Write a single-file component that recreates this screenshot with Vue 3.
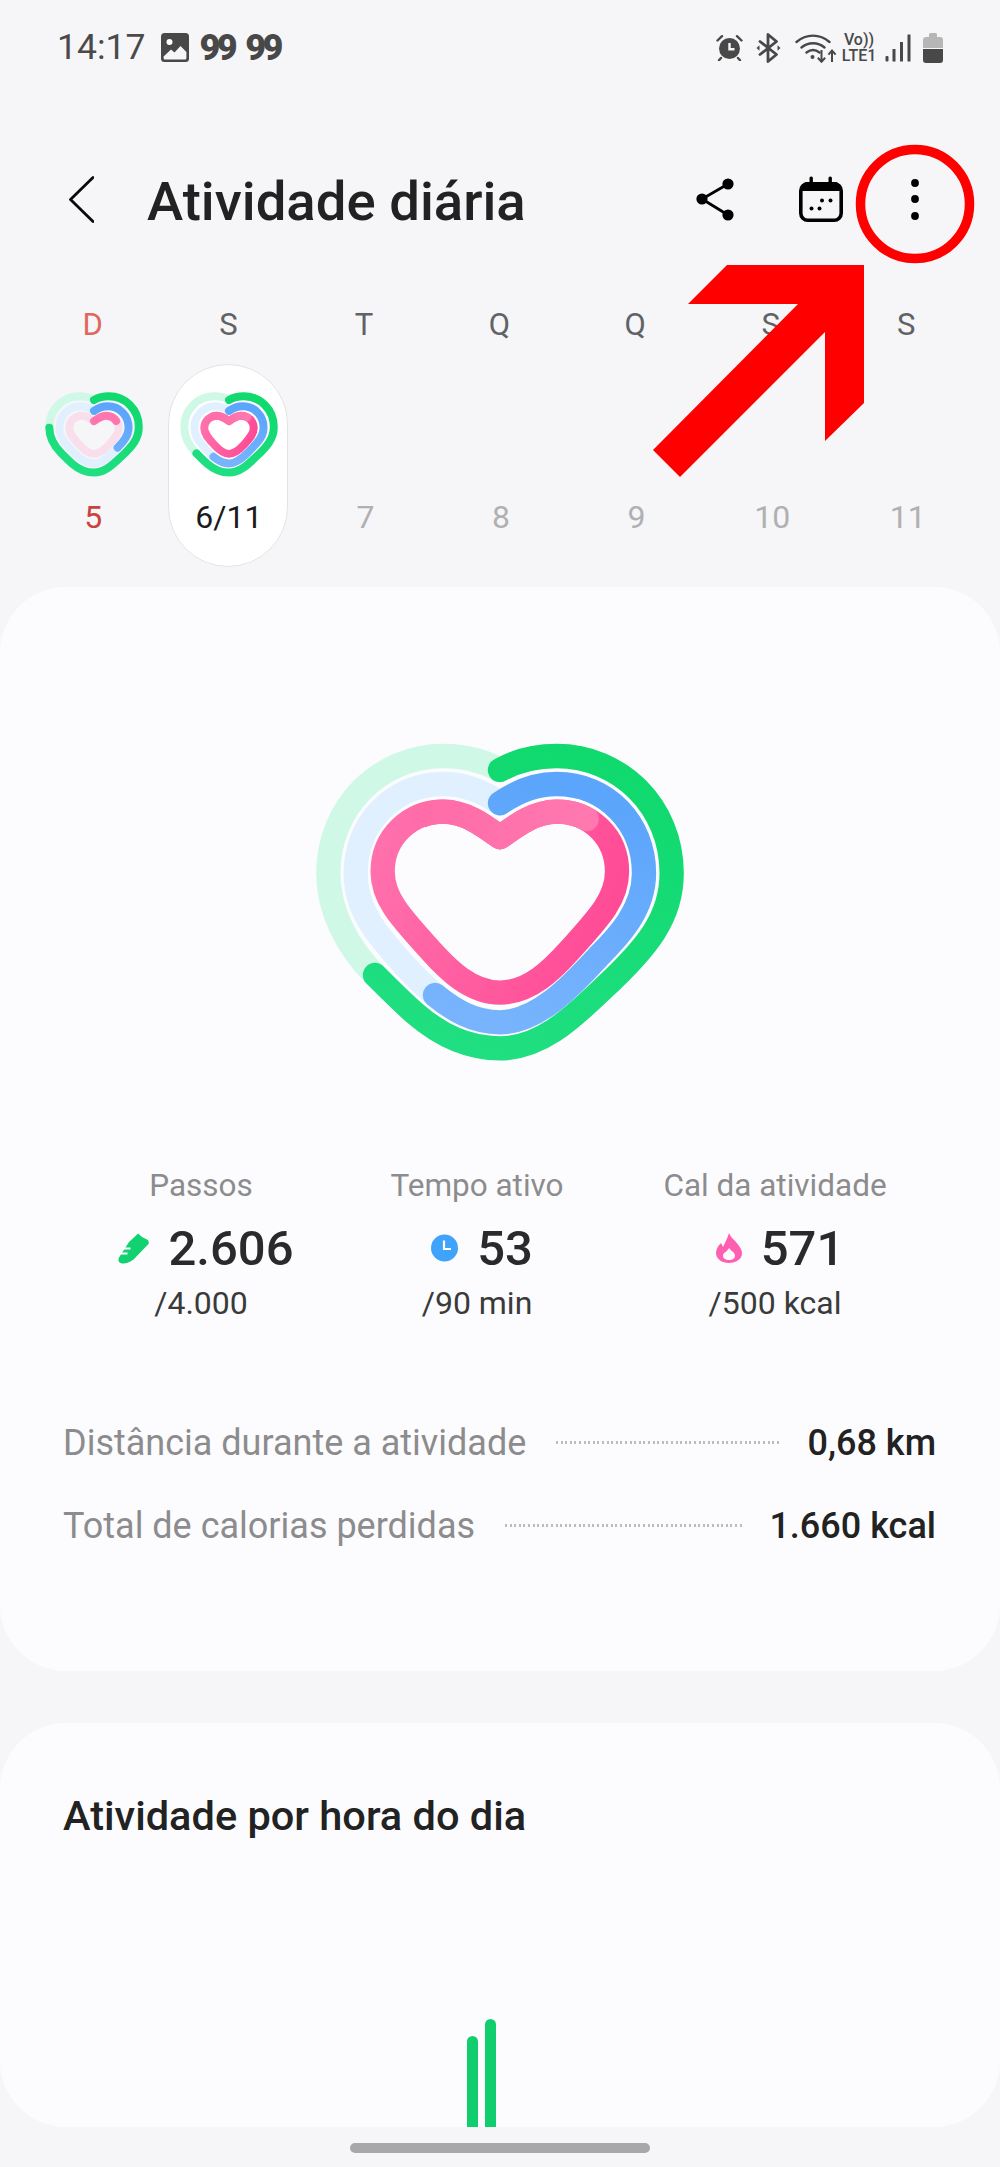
<script setup>
const greenFull = 'M630 150C680 122 740 108 800 108C990 108 1145 260 1145 460C1145 590 1075 680 940 805C860 880 760 985 630 985C530 985 450 945 375 880C340 850 300 810 255 765'
const greenPale = 'M630 150C580 122 520 108 460 108C270 108 115 260 115 460C115 570 170 680 255 765'
const greenLong = greenFull + 'C170 680 115 570 115 470'
const blueFull = 'M630 250C680 215 740 192 800 192C950 192 1062 310 1062 460C1062 570 985 650 925 710C860 780 750 907 630 907C550 907 490 870 435 825'
const bluePale = 'M630 250C580 215 520 192 460 192C310 192 197 310 197 460C197 540 230 600 270 650C310 700 370 770 435 825'
const blueShort = 'M630 250C680 215 740 192 800 192C950 192 1062 310 1062 460C1062 570 985 650 925 710'
const bluePaleAll = bluePale + 'C490 870 550 907 630 907C750 907 860 780 925 710'
const pinkRing = 'M630 352C680 315 735 275 800 275C900 275 981 350 981 455C981 540 920 600 835 695C790 745 720 818 630 818C540 818 470 745 425 695C340 600 278 540 278 455C278 350 360 275 460 275C525 275 580 315 630 352Z'
const pinkOver = 'M400 285C410 280 440 275 460 275C525 275 580 315 630 352C680 315 735 275 800 275C835 275 865 283 890 297'
const pinkTop = 'M630 352C680 315 735 275 800 275C860 275 915 305 945 350'

const week = [
  { d: 'D', n: '5', kind: 'sun' },
  { d: 'S', n: '6/11', kind: 'today' },
  { d: 'T', n: '7' },
  { d: 'Q', n: '8' },
  { d: 'Q', n: '9' },
  { d: 'S', n: '10' },
  { d: 'S', n: '11' }
]
</script>

<template>
  <div class="page">
    <div class="status">
      <div class="status-left">
        <span class="time">14:17</span>
        <svg class="st-img" width="28" height="29" viewBox="0 0 28 29">
          <rect width="28" height="29" rx="3.5" fill="#484848" />
          <circle cx="8.5" cy="9" r="3" fill="#fff" />
          <path d="M2.6 23.5 10 16.5l3.5 3 6-6.5 5.9 6v6.2a1.4 1.4 0 0 1-1.4 1.4H4a1.4 1.4 0 0 1-1.4-1.4Z" fill="#f6f6f8" />
        </svg>
        <span class="badge">99</span>
        <span class="badge">99</span>
      </div>
      <div class="status-right">
        <svg width="27" height="27" viewBox="0 0 27 27">
          <circle cx="13.5" cy="14.5" r="10.5" fill="#484848" />
          <path d="M1.5 6.5 6 2.2M25.5 6.5 21 2.2M5 24l-2 2.2M22 24l2 2.2" stroke="#484848" stroke-width="2.4" stroke-linecap="round" />
          <path d="M13.5 9v6.3h5" stroke="#f6f6f8" stroke-width="2.4" fill="none" />
        </svg>
        <svg width="25" height="30" viewBox="0 0 25 30">
          <path d="M4 8.5 20.5 21.5 12 28.5V1.5L20.5 8.5 4 21.5" fill="none" stroke="#484848" stroke-width="2.8" stroke-linejoin="round" stroke-linecap="round" />
          <path d="M0.5 15l3-2.8v5.6ZM24.5 15l-3-2.8v5.6Z" fill="#484848" />
        </svg>
        <svg width="42" height="30" viewBox="0 0 42 30">
          <path d="M1.5 9C11 .5 25 .5 34.5 9M6.5 14.5C13 8.8 23 8.8 29.5 14.5M11.5 19.5c4-3.2 9-3.2 13 0" fill="none" stroke="#484848" stroke-width="2.4" stroke-linecap="round" />
          <circle cx="17.5" cy="24" r="2" fill="#484848" />
          <path d="M26.5 17v11.5M22.8 24.8l3.7 4 3.7-4M37 29V18M33.4 21.6l3.6-4 3.6 4" fill="none" stroke="#484848" stroke-width="2" />
        </svg>
        <div class="volte"><span>Vo))</span><span>LTE1</span></div>
        <svg width="26" height="28" viewBox="0 0 26 28">
          <rect x="0.5" y="22" width="3" height="5.5" rx="1" fill="#484848" />
          <rect x="7.5" y="15" width="3" height="12.5" fill="#484848" />
          <rect x="15" y="8" width="3" height="19.5" fill="#484848" />
          <rect x="22.5" y="0.5" width="3" height="27" fill="#484848" />
        </svg>
        <svg class="st-batt" width="20" height="30" viewBox="0 0 20 30">
          <path d="M6 1.5a1.5 1.5 0 0 1 1.5-1.5h5A1.5 1.5 0 0 1 14 1.5V4h3a3 3 0 0 1 3 3v8H0V7a3 3 0 0 1 3-3h3Z" fill="#b6b6b6" />
          <path d="M0 16h20v11a3 3 0 0 1-3 3H3a3 3 0 0 1-3-3Z" fill="#484848" />
        </svg>
      </div>
    </div>

    <div class="header">
      <svg class="back" width="25" height="47" viewBox="0 0 25 47">
        <path d="M24 1.5 1.5 23.5 24 45.5" fill="none" stroke="#0a0a0a" stroke-width="2.8" stroke-linecap="round" stroke-linejoin="round" />
      </svg>
      <h1 class="title">Atividade diária</h1>
      <svg class="share" width="40" height="44" viewBox="0 0 40 44">
        <path d="M33 7 7 22l26 16" fill="none" stroke="#000" stroke-width="2.8" />
        <circle cx="33" cy="7" r="5.6" />
        <circle cx="7" cy="22" r="5.6" />
        <circle cx="33" cy="38" r="5.6" />
      </svg>
      <svg class="cal" width="44" height="46" viewBox="0 0 44 46">
        <rect x="1.8" y="7.8" width="40.4" height="36.4" rx="7" fill="none" stroke="#000" stroke-width="3.6" />
        <path d="M3 15V11a5 5 0 0 1 5-5h28a5 5 0 0 1 5 5v4Z" />
        <rect x="10.5" y="0.5" width="3.4" height="8" rx="1.5" />
        <rect x="29.5" y="0.5" width="3.4" height="8" rx="1.5" />
        <circle cx="12.5" cy="32.5" r="2" />
        <circle cx="20.5" cy="32.5" r="2" />
        <circle cx="23" cy="24.5" r="2" />
        <circle cx="31.5" cy="24.5" r="2" />
      </svg>
      <svg class="more" width="8" height="41" viewBox="0 0 8 41">
        <circle cx="4" cy="4" r="3.9" />
        <circle cx="4" cy="20" r="3.9" />
        <circle cx="4" cy="37" r="3.9" />
      </svg>
    </div>

    <div class="week">
      <div v-for="(w, i) in week" :key="i" class="day" :class="w.kind">
        <div class="dow">{{ w.d }}</div>
        <div class="tile">
          <svg v-if="w.kind === 'sun'" class="mini" viewBox="77 72 1105 950">
            <g class="outer">
              <path :d="greenPale" class="r" stroke="#cff8e6" />
            </g>
            <g class="mid" transform="translate(630 565) scale(.92) translate(-630 -565)">
              <path :d="bluePaleAll" class="r" stroke="#e0f0fe" />
            </g>
            <g class="outer">
              <path :d="greenLong" class="r" stroke="url(#gGreen)" />
            </g>
            <g class="mid" transform="translate(630 565) scale(.92) translate(-630 -565)">
              <path :d="blueShort" class="r" stroke="url(#gBlue)" />
            </g>
            <g class="inner" transform="translate(630 565) scale(.81) translate(-630 -565)">
              <path :d="pinkRing" class="r" stroke="#f8dfeb" />
              <path :d="pinkTop" class="r" stroke="#ff75ae" />
            </g>
          </svg>
          <svg v-else-if="w.kind === 'today'" class="mini" viewBox="77 72 1105 950">
            <g class="outer">
              <path :d="greenPale" class="r" stroke="#cff8e6" />
            </g>
            <g class="mid" transform="translate(630 565) scale(.92) translate(-630 -565)">
              <path :d="bluePale" class="r" stroke="#e0f0fe" />
            </g>
            <g class="outer">
              <path :d="greenFull" class="r" stroke="url(#gGreen)" />
            </g>
            <g class="mid" transform="translate(630 565) scale(.92) translate(-630 -565)">
              <path :d="blueFull" class="r" stroke="url(#gBlue)" />
            </g>
            <g class="inner" transform="translate(630 565) scale(.81) translate(-630 -565)">
              <path :d="pinkRing" class="r" stroke="url(#gPink)" />
              <path :d="pinkOver" class="r" stroke="url(#gPinkTop)" />
            </g>
          </svg>
          <div class="num">{{ w.n }}</div>
        </div>
      </div>
    </div>

    <section class="card card-main">
      <svg class="heart" width="420" height="360" viewBox="0 0 1260 1080">
        <defs>
          <linearGradient id="gGreen" gradientUnits="userSpaceOnUse" x1="800" y1="100" x2="500" y2="1000">
            <stop offset="0" stop-color="#10d96e" />
            <stop offset="1" stop-color="#20df82" />
          </linearGradient>
          <linearGradient id="gBlue" gradientUnits="userSpaceOnUse" x1="800" y1="190" x2="600" y2="910">
            <stop offset="0" stop-color="#5ba5fc" />
            <stop offset="1" stop-color="#78b4fd" />
          </linearGradient>
          <linearGradient id="gPink" gradientUnits="userSpaceOnUse" x1="260" y1="300" x2="1000" y2="560">
            <stop offset="0" stop-color="#ff72ad" />
            <stop offset="1" stop-color="#ff4a95" />
          </linearGradient>
          <linearGradient id="gPinkTop" gradientUnits="userSpaceOnUse" x1="400" y1="285" x2="890" y2="285">
            <stop offset="0" stop-color="#ff6ca8" />
            <stop offset="1" stop-color="#ff78b0" />
          </linearGradient>
          <filter id="soft" x="-20%" y="-40%" width="140%" height="180%">
            <feGaussianBlur stdDeviation="9" />
          </filter>
        </defs>
        <path :d="greenPale" class="r" stroke="#cff8e6" />
        <path :d="bluePale" class="r" stroke="#e0f0fe" />
        <path :d="greenFull" class="r" stroke="url(#gGreen)" />
        <path :d="blueFull" class="r" stroke="url(#gBlue)" />
        <path :d="pinkRing" class="r" stroke="url(#gPink)" />
        <path d="M860 287 898 302" class="r" stroke="#a8205f" stroke-opacity="0.45" filter="url(#soft)" />
        <path :d="pinkOver" class="r" stroke="url(#gPinkTop)" />
      </svg>

      <div class="stats">
        <div class="stat">
          <div class="s-label">Passos</div>
          <div class="s-value">
            <svg width="31" height="31" viewBox="0 0 31 31">
              <path d="M20 0.5C22 2 24 4.5 27 5.5 30 6.5 31.5 8.5 30.5 11L17 25C14 28.5 9 30.5 4 30.5 1 30.5-0.5 27.5 1 24.5L11 9 17 3.5Z" fill="#12d171" />
              <path d="M2 20.5 9.5 20.5M5 15.5 12.5 15.5" stroke="#fcfcfe" stroke-width="1.8" />
            </svg>
            <span>2.606</span>
          </div>
          <div class="s-sub">/4.000</div>
        </div>
        <div class="stat">
          <div class="s-label">Tempo ativo</div>
          <div class="s-value">
            <svg width="27" height="28" viewBox="0 0 27 28">
              <circle cx="13.5" cy="14" r="13.5" fill="#3fa2fb" />
              <path d="M13 6.5V15h7" fill="none" stroke="#fff" stroke-width="2.2" />
            </svg>
            <span>53</span>
          </div>
          <div class="s-sub">/90 min</div>
        </div>
        <div class="stat">
          <div class="s-label">Cal da atividade</div>
          <div class="s-value">
            <svg width="26" height="30" viewBox="0 0 26 30">
              <path d="M13 0C15 5 19 7 22 11.5 25 15.5 26 18 26 20.5 26 26 20 30 13 30 6 30 0 26 0 20 0 16 2 13 5 10L7 14C9 10 11 6 13 0Z" fill="#ff5fb0" />
              <path d="M13 15C15 18 19 19.5 19 22.5 19 25.5 16.5 27 13 27 9.5 27 7 25.5 7 22.5 7 20 11 19 13 15Z" fill="#fcfcfe" />
            </svg>
            <span>571</span>
          </div>
          <div class="s-sub">/500 kcal</div>
        </div>
      </div>

      <div class="rows">
        <div class="row">
          <span class="r-label">Distância durante a atividade</span>
          <span class="dots"></span>
          <span class="r-value">0,68 km</span>
        </div>
        <div class="row">
          <span class="r-label">Total de calorias perdidas</span>
          <span class="dots"></span>
          <span class="r-value">1.660 kcal</span>
        </div>
      </div>
    </section>

    <section class="card card-hours">
      <h2 class="h2">Atividade por hora do dia</h2>
      <div class="bars">
        <span class="bar b1"></span>
        <span class="bar b2"></span>
      </div>
    </section>

    <div class="nav"><span class="handle"></span></div>

    <svg class="annot" width="1000" height="2167" viewBox="0 0 1000 2167">
      <circle cx="915" cy="204" r="54.5" fill="none" stroke="#ff0000" stroke-width="9.5" />
      <path d="M727 265H864V403L825 441V332L680 477 653 450 798 304H688Z" fill="#ff0000" />
    </svg>
  </div>
</template>

<style scoped>
.page {
  position: relative;
  width: 1000px;
  height: 2167px;
  overflow: hidden;
  background: #f6f6f8;
  font-family: Roboto, "Liberation Sans", sans-serif;
  color: #222;
}
.status {
  height: 95px;
  padding: 0 57px 0 57px;
  display: flex;
  align-items: center;
  justify-content: space-between;
}
.status-left { display: flex; align-items: center; }
.time { font-size: 35.5px; color: #4a4a4a; margin-right: 16px; line-height: 1; }
.st-img { margin-right: 10px; }
.badge {
  font-size: 36px;
  font-weight: 900;
  color: #484848;
  letter-spacing: -3.5px;
  line-height: 1;
  margin-right: 11px;
}
.status-right { display: flex; align-items: center; }
.status-right > svg:nth-child(1) { margin-right: 13px; }
.status-right > svg:nth-child(2) { margin-right: 14px; }
.status-right > svg:nth-child(3) { margin-right: 4px; }
.volte {
  display: flex;
  flex-direction: column;
  align-items: center;
  font-size: 16px;
  font-weight: 500;
  line-height: 16px;
  color: #484848;
  width: 36px;
  margin-right: 8px;
}
.st-batt { margin-left: 12px; }

.header {
  margin-top: 53px;
  height: 102px;
  padding: 0 81px 0 69px;
  display: flex;
  align-items: center;
}
.back { margin-right: 53px; }
.title {
  margin: 0;
  flex: 1;
  font-size: 54.5px;
  font-weight: 500;
  color: #222;
  line-height: 1;
  padding-top: 4px;
}
.share { margin-right: 64px; }
.cal { margin-right: 68px; }

.week {
  margin-top: 57px;
  padding: 0 26px 0 25px;
  display: grid;
  grid-template-columns: repeat(7, 1fr);
}
.day { display: flex; flex-direction: column; align-items: center; }
.dow {
  font-size: 31px;
  font-weight: 400;
  line-height: 36px;
  height: 36px;
  color: #606266;
}
.sun .dow { color: #e0675f; }
.tile {
  margin-top: 21px;
  width: 120px;
  height: 203px;
  box-sizing: border-box;
  border-radius: 60px;
  border: 1px solid transparent;
  display: flex;
  flex-direction: column;
  align-items: center;
  justify-content: flex-end;
  padding-bottom: 31px;
  position: relative;
}
.today .tile { background: #fff; border-color: #e4e4e4; }
.mini { width: 96px; height: 85px; margin: 0 0 22px 2px; overflow: visible; }
.num { font-size: 32px; line-height: 36px; color: #b0b0b2; padding-left: 3px; }
.sun .num { color: #c9423e; padding-left: 1px; }
.today .num { color: #1b1b1b; padding-left: 1px; }
.r { fill: none; stroke-linecap: round; stroke-linejoin: round; }
.heart { stroke-width: 73; }
.outer { stroke-width: 92; }
.mid { stroke-width: 100; }
.inner { stroke-width: 113; }

.card { background: #fcfcfe; border-radius: 66px; }
.card-main {
  margin-top: 20px;
  height: 1084px;
  padding-top: 133px;
  box-sizing: border-box;
  display: flex;
  flex-direction: column;
  align-items: center;
}
.heart { display: block; }
.stats {
  margin-top: 88px;
  align-self: stretch;
  padding-left: 63px;
  display: grid;
  grid-template-columns: 276px 276px 320px;
}
.stat { display: flex; flex-direction: column; align-items: center; }
.s-label { font-size: 31.5px; line-height: 36px; color: #8c8c8e; }
.s-value {
  margin-top: 17px;
  padding-left: 10px;
  height: 54px;
  display: flex;
  align-items: center;
  gap: 19px;
  font-size: 49px;
  font-weight: 500;
  color: #2a2a2c;
}
.s-sub { margin-top: 10px; font-size: 32px; line-height: 36px; color: #3a3a3a; }
.rows {
  margin-top: 101px;
  align-self: stretch;
  padding: 0 64px 0 63px;
  display: flex;
  flex-direction: column;
  gap: 42px;
}
.row { display: flex; align-items: center; height: 41px; }
.r-label { font-size: 36px; color: #8c8c8e; }
.dots {
  flex: 1;
  height: 3px;
  margin: 0 26px 0 30px;
  background: repeating-linear-gradient(90deg, #bcbcbe 0 2px, transparent 2px 4.6px);
}
.r-value { font-size: 36px; font-weight: 500; color: #222; }

.card-hours {
  margin-top: 52px;
  height: 404px;
  overflow: hidden;
  display: flex;
  flex-direction: column;
  justify-content: space-between;
}
.h2 {
  margin: 71px 0 0 63px;
  font-size: 41.5px;
  font-weight: 500;
  line-height: 44px;
  color: #222;
}
.bars { display: flex; align-items: flex-end; gap: 7px; margin-left: 467px; }
.bar { width: 11px; background: #10ce6e; border-radius: 6px 6px 0 0; }
.b1 { height: 91px; }
.b2 { height: 108px; }

.nav { height: 40px; display: flex; justify-content: center; align-items: center; }
.handle { width: 300px; height: 10px; border-radius: 5px; background: #a8a8a8; margin-top: 1px; }

.annot { position: absolute; left: 0; top: 0; pointer-events: none; }
</style>

<style>
html, body { margin: 0; background: #f6f6f8; }
</style>
